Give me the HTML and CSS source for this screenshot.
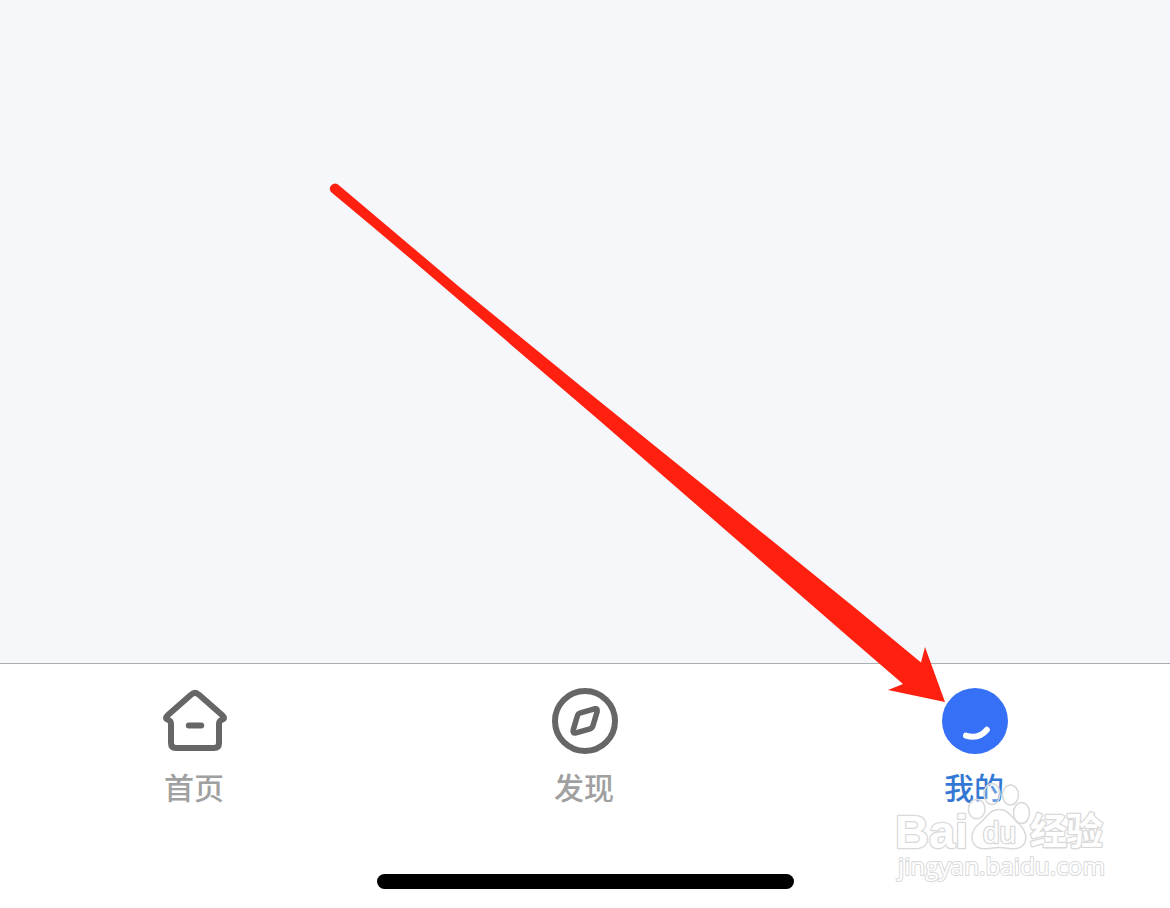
FILE: index.html
```html
<!DOCTYPE html>
<html lang="zh-CN">
<head>
  <meta charset="UTF-8">
  <meta name="viewport" content="width=device-width, initial-scale=1.0">
  <title>我的</title>
  <link rel="stylesheet" href="styles.css">
</head>
<body>
  <div class="screen">
    <main class="content"></main>

    <nav class="tab-bar">
      <a class="tab">
        <svg class="tab-icon" viewBox="0 0 70 70">
          <path d="M31 8.8Q35 5 39 8.8L62.3 29.2Q66 32.6 61.6 34Q59 35 59 38V57Q59 62 54 62H16Q11 62 11 57V38Q11 35 8.4 34Q4 32.6 7.7 29.2Z"/>
          <path d="M28.8 39.5H41.2"/>
        </svg>
        <span class="tab-label">首页</span>
      </a>
      <a class="tab">
        <svg class="tab-icon" viewBox="0 0 70 70">
          <circle cx="35" cy="35" r="30"/>
          <path class="needle" d="M30.5 26.8L44.5 22.8Q48 22 47.2 25.5L43 39.5Q42.3 42 40 42.8L26 46.8Q22.2 47.8 23.2 44L27.5 29.5Q28.2 27.4 30.5 26.8Z"/>
        </svg>
        <span class="tab-label">发现</span>
      </a>
      <a class="tab active">
        <svg class="tab-icon" viewBox="0 0 70 70">
          <circle class="face" cx="35" cy="35" r="33"/>
          <path class="smile" d="M26 49.6Q38.8 53.4 46.8 43.8"/>
        </svg>
        <span class="tab-label">我的</span>
      </a>
    </nav>

    <footer class="home-area">
      <div class="home-indicator"></div>
    </footer>

    <!-- watermark -->
    <svg class="watermark" viewBox="0 0 220 110">
      <g class="paw">
        <ellipse cx="86.7" cy="29" rx="8.3" ry="9.8"/>
        <ellipse cx="102" cy="14" rx="8" ry="10.5"/>
        <ellipse cx="120.5" cy="15" rx="8" ry="10"/>
        <ellipse cx="131.5" cy="33" rx="8" ry="10.5"/>
        <path d="M109 29.5C99 29.5 97 38 90 43C82 49 80 58 84 64C90 72 99 67.5 109 67.5C119 67.5 128 72 134 64C138 58 135 49 128 43C121 37 119 29.5 109 29.5Z"/>
      </g>
      <text class="mark-bai" x="5" y="68" textLength="73" lengthAdjust="spacingAndGlyphs">Bai</text>
      <text class="mark-du" x="93" y="63" textLength="33" lengthAdjust="spacingAndGlyphs">du</text>
      <text class="mark-cn" x="140" y="65" textLength="73">经验</text>
      <text class="mark-url" x="8" y="95" textLength="207" lengthAdjust="spacingAndGlyphs">jingyan.baidu.com</text>
    </svg>

    <!-- pointer to the profile tab -->
    <svg class="arrow" viewBox="0 0 1170 908">
      <path d="M338 184.5Q399 236 460 287.5L580 385.5L720 498.5L860 612L921 662.5L925 647L945 702L888 690L903 684L852 640L600 421L460 301Q396 246 331 192A5.2 5.2 0 0 1 338 184.5Z"/>
    </svg>
  </div>
</body>
</html>
```

FILE: styles.css
```css
body {
  margin: 0;
  font-family: "Noto Sans CJK SC", sans-serif;
  background-color: #fff;
}

.screen {
  position: relative;
  display: flex;
  flex-direction: column;
  height: 908px;
  overflow: hidden;
}

.content {
  flex: 1;
  background-color: #f5f7fb;
}

.tab-bar {
  display: flex;
  height: 187px;
  border-top: 1px solid #adaeb2;
}

.tab {
  flex: 1;
  display: flex;
  flex-direction: column;
  align-items: center;
  padding-top: 22px;
  color: #a0a0a0;
}

.tab.active {
  color: #3478d4;
}

.tab-icon {
  width: 70px;
  height: 70px;
  fill: none;
  stroke: #666;
  stroke-width: 6;
  stroke-linecap: round;
  stroke-linejoin: round;
}

.needle {
  stroke-width: 5.5;
}

.tab-icon .face {
  fill: #3670f6;
  stroke: none;
}

.smile {
  stroke: #fff;
}

.tab-label {
  margin-top: 8px;
  padding-right: 2px;
  font-size: 30px;
  font-weight: 500;
  line-height: 44px;
}

.home-area {
  display: flex;
  justify-content: center;
  height: 57px;
}

.home-indicator {
  width: 417px;
  height: 15px;
  margin-top: 23px;
  border-radius: 8px;
  background-color: #000;
}

.watermark {
  position: absolute;
  left: 890px;
  top: 780px;
  width: 220px;
  height: 110px;
  fill: #fff;
  stroke: #d9d9d9;
  stroke-width: 1.5;
}

.paw {
  fill: rgba(255, 255, 255, 0.25);
}

.mark-bai,
.mark-du {
  font-family: "Liberation Sans", Arial, sans-serif;
}

.mark-bai,
.mark-du,
.mark-cn,
.mark-url {
  paint-order: stroke;
  stroke-width: 2.6;
  stroke-linejoin: round;
}

.mark-bai {
  font-size: 47px;
  font-weight: bold;
}

.mark-du {
  font-size: 29px;
  font-weight: normal;
}

.mark-cn {
  font-size: 37px;
  font-weight: bold;
}

.mark-url {
  font-family: "Open Sans", "Noto Sans", sans-serif;
  font-size: 24px;
  stroke-width: 2;
}

.arrow {
  position: absolute;
  left: 0;
  top: 0;
  width: 1170px;
  height: 908px;
  fill: #ff2010;
}
```
